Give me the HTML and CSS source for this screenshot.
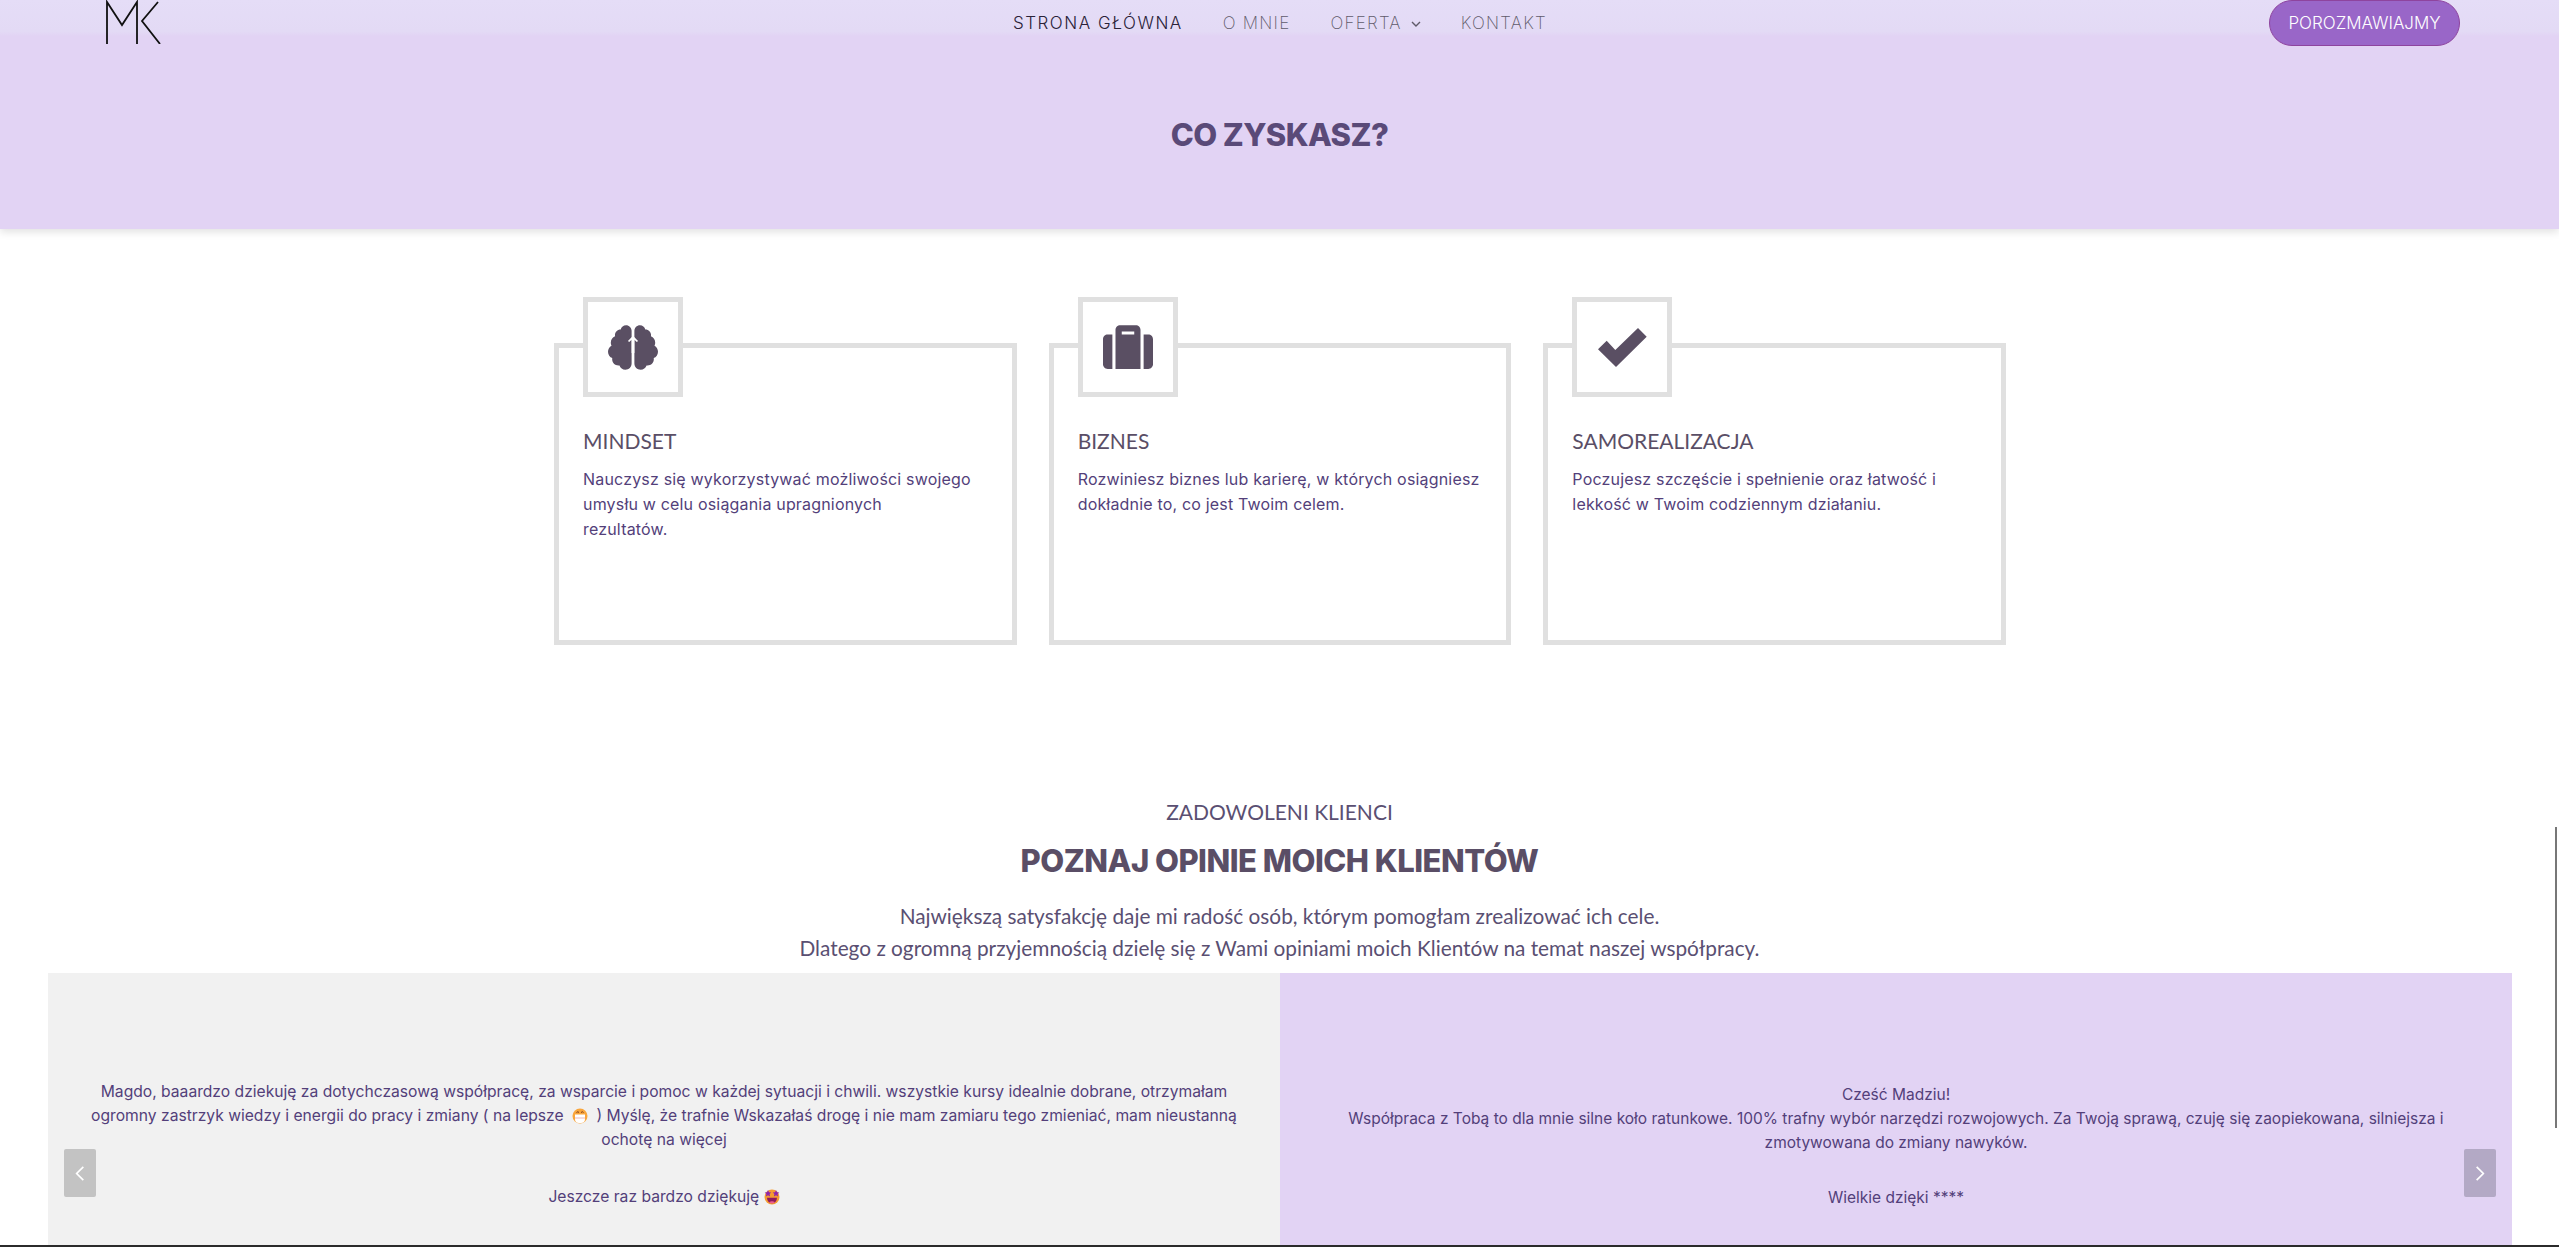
FILE: index.html
```html
<!DOCTYPE html>
<html lang="pl">
<head>
    <meta charset="UTF-8">
    <meta name="viewport" content="width=device-width, initial-scale=1.0">
    <title>Co zyskasz?</title>
    <link rel="stylesheet" href="styles.css">
</head>
<body>
<header class="site-header">
    <a class="logo" href="#">
        <svg viewBox="0 0 56 44" width="56" height="44" fill="none" stroke="#111" stroke-width="1.800">
            <path d="M1 44V2L16 25 31 2V44"/>
            <path d="M52 2 36 21 54 44"/>
        </svg>
    </a>
    <nav class="main-nav">
        <a class="active" href="#">STRONA GŁÓWNA</a>
        <a href="#">O MNIE</a>
        <a href="#">OFERTA
            <svg class="caret" viewBox="0 0 10 6" width="10" height="6" fill="none" stroke="#5f5a68" stroke-width="1.4"><path d="M1 1l4 4 4-4"/></svg>
        </a>
        <a href="#">KONTAKT</a>
    </nav>
    <div class="header-action">
        <a class="talk-btn" href="#">POROZMAWIAJMY</a>
    </div>
</header>

<section class="hero">
    <h1>CO ZYSKASZ?</h1>
</section>

<section class="benefits">
    <div class="benefit-card">
        <div class="icon-box">
            <svg viewBox="0 0 576 512" width="50" height="45" fill="#5a4f63">
                <path d="M208 0c-29.9 0-54.7 20.5-61.8 48.2-.8 0-1.4-.2-2.2-.2-35.3 0-64 28.7-64 64 0 4.8.6 9.5 1.7 14C52.5 138 32 166.6 32 200c0 12.6 3.2 24.3 8.3 34.9C16.3 248.7 0 274.3 0 304c0 33.3 20.4 61.9 49.4 73.9-.9 4.6-1.4 9.3-1.4 14.1 0 39.8 32.2 72 72 72 4.1 0 8.1-.5 12-1.2 9.6 28.5 36.2 49.2 68 49.2 39.8 0 72-32.2 72-72V64c0-35.3-28.7-64-64-64zm368 304c0-29.7-16.3-55.3-40.3-69.1 5.2-10.6 8.3-22.3 8.3-34.9 0-33.4-20.5-62-49.7-74 1-4.5 1.7-9.2 1.7-14 0-35.3-28.7-64-64-64-.8 0-1.5.2-2.2.2C422.7 20.5 397.9 0 368 0c-35.3 0-64 28.6-64 64v376c0 39.8 32.2 72 72 72 31.8 0 58.4-20.7 68-49.2 3.9.7 7.9 1.2 12 1.2 39.8 0 72-32.2 72-72 0-4.8-.5-9.5-1.4-14.1 29-12 49.4-40.6 49.4-73.9z"/>
                <path fill="#fff" d="M288 120l58 62-14 12-28-26v150h-32V168l-28 26-14-12z"/>
            </svg>
        </div>
        <h3>MINDSET</h3>
        <p>Nauczysz się wykorzystywać możliwości swojego<br>umysłu w celu osiągania upragnionych<br>rezultatów.</p>
    </div>
    <div class="benefit-card">
        <div class="icon-box">
            <svg viewBox="0 0 512 448" width="50" height="44" fill="#5a4f63">
                <path d="M128 448h256V48c0-26.5-21.500-48-48-48H176c-26.500 0-48 21.500-48 48v400zm64-384h128v32H192V64zm320 80v256c0 26.500-21.500 48-48 48h-48V96h48c26.500 0 48 21.500 48 48zM96 448H48c-26.500 0-48-21.500-48-48V144c0-26.500 21.500-48 48-48h48v352z"/>
            </svg>
        </div>
        <h3>BIZNES</h3>
        <p>Rozwiniesz biznes lub karierę, w których osiągniesz<br>dokładnie to, co jest Twoim celem.</p>
    </div>
    <div class="benefit-card">
        <div class="icon-box">
            <svg viewBox="0 0 49 39" width="49" height="39" fill="#5a4f63">
                <path d="M48.700 8.700 40 0 17.300 22 8.700 12.700 0 21.300 18 39z"/>
            </svg>
        </div>
        <h3>SAMOREALIZACJA</h3>
        <p>Poczujesz szczęście i spełnienie oraz łatwość i<br>lekkość w Twoim codziennym działaniu.</p>
    </div>
</section>

<section class="opinions">
    <h4>ZADOWOLENI KLIENCI</h4>
    <h2>POZNAJ OPINIE MOICH KLIENTÓW</h2>
    <p class="lead">Największą satysfakcję daje mi radość osób, którym pomogłam zrealizować ich cele.<br>Dlatego z ogromną przyjemnością dzielę się z Wami opiniami moich Klientów na temat naszej współpracy.</p>
</section>

<section class="slider">
    <div class="slide slide-grey">
        <p>Magdo, baaardzo dziekuję za dotychczasową współpracę, za wsparcie i pomoc w każdej sytuacji i chwili. wszystkie kursy idealnie dobrane, otrzymałam<br>ogromny zastrzyk wiedzy i energii do pracy i zmiany ( na lepsze
            <svg class="emoji emoji-wide" viewBox="0 0 16 16" width="16" height="16">
                <circle cx="8" cy="8" r="7.500" fill="#f9a63c"/>
                <path d="M3 6.500h10V11a4 4 0 0 1-4 4H7a4 4 0 0 1-4-4z" fill="#fff"/>
                <path d="M4.500 4.500q1.500-1.500 2.500 0M9 4.500q1.500-1.500 2.500 0" fill="none" stroke="#7a3b1c" stroke-width="1"/>
                <path d="M3 10h10" stroke="#d88" stroke-width=".6"/>
            </svg>
            ) Myślę, że trafnie Wskazałaś drogę i nie mam zamiaru tego zmieniać, mam nieustanną<br>ochotę na więcej</p>
        <p class="sign">Jeszcze raz bardzo dziękuję
            <svg class="emoji" viewBox="0 0 16 16" width="16" height="16">
                <circle cx="8" cy="8" r="7.500" fill="#f59b30"/>
                <path d="M4 1l1 2.200 2.300.3-1.700 1.600.5 2.400L4 6.300 1.900 7.500l.5-2.400L.7 3.500 3 3.200zM12 1l1 2.200 2.300.3-1.700 1.600.5 2.400L12 6.300 9.900 7.500l.5-2.400-1.700-1.600L11 3.200z" fill="#8e24aa"/>
                <path d="M3 8.800h10A5 5.500 0 0 1 3 8.800z" fill="#8e1a5c"/>
                <path d="M5 13.300q3-2 6 0a5 5 0 0 1-6 0z" fill="#f06292"/>
            </svg>
        </p>
    </div>
    <div class="slide slide-lilac">
        <p>Cześć Madziu!<br>Współpraca z Tobą to dla mnie silne koło ratunkowe. 100% trafny wybór narzędzi rozwojowych. Za Twoją sprawą, czuję się zaopiekowana, silniejsza i<br>zmotywowana do zmiany nawyków.</p>
        <p class="sign">Wielkie dzięki ****</p>
    </div>
    <button class="arrow arrow-prev" aria-label="Poprzedni">
        <svg viewBox="0 0 12 20" width="10" height="17" fill="none" stroke="#fff" stroke-width="2"><path d="M10 2 2 10l8 8"/></svg>
    </button>
    <button class="arrow arrow-next" aria-label="Następny">
        <svg viewBox="0 0 12 20" width="10" height="17" fill="none" stroke="#fff" stroke-width="2"><path d="M2 2l8 8-8 8"/></svg>
    </button>
</section>

<div class="scroll-thumb"></div>
<div class="bottom-line"></div>
</body>
</html>
```

FILE: styles.css
```css
html,
body {
    margin: 0;
    padding: 0;
    height: 1247px;
    overflow: hidden;
}

body {
    position: relative;
    font-family: Inter, "Noto Sans", sans-serif;
    background-color: #fff;
    color: #533f7a;
}

h1,
h2,
h3,
h4,
p {
    margin: 0;
    font-weight: normal;
}

a {
    text-decoration: none;
}

/* header lies over the hero */
.site-header {
    position: absolute;
    top: 0;
    left: 0;
    right: 0;
    height: 36px;
    padding: 0 99px 0 106px;
    display: grid;
    grid-template-columns: 1fr auto 1fr;
    background: linear-gradient(#e5ddf7, #e3daf5 88%, #e2d3f4);
    z-index: 2;
}

.logo {
    display: block;
    height: 44px;
}

.main-nav {
    display: flex;
    gap: 40px;
    height: 46px;
    margin-left: -6px;
    align-items: center;
}

.main-nav a {
    color: #5f5a6a;
    font-size: 17px;
    font-weight: 200;
    letter-spacing: 1.25px;
}

.main-nav a.active {
    color: #2a2238;
    font-weight: 300;
    letter-spacing: 1.5px;
}

.caret {
    margin-left: 3px;
    vertical-align: 2px;
}

.header-action {
    display: flex;
    justify-content: flex-end;
}

.talk-btn {
    display: flex;
    align-items: center;
    justify-content: center;
    box-sizing: border-box;
    width: 191px;
    height: 46px;
    background-color: #9966c8;
    border: 1px solid #8e449e;
    border-radius: 23px;
    color: #fff;
    font-size: 17px;
    font-weight: 300;
}

.hero {
    box-sizing: border-box;
    height: 229px;
    padding-top: 40px;
    display: flex;
    align-items: center;
    justify-content: center;
    background-color: #e2d3f4;
    box-shadow: 0 3px 8px rgba(0, 0, 0, 0.12);
}

.hero h1 {
    font-size: 31px;
    font-weight: 800;
    letter-spacing: -0.6px;
    color: #5a4a78;
}

.benefits {
    display: grid;
    grid-template-columns: repeat(3, 1fr);
    gap: 32px;
    width: 1452px;
    margin: 114px 0 0 554px;
}

.benefit-card {
    box-sizing: border-box;
    height: 302px;
    padding: 0 24px;
    border: 5px solid #e0e0e0;
}

.icon-box {
    box-sizing: border-box;
    width: 100px;
    height: 100px;
    margin-top: -51px;
    display: flex;
    align-items: center;
    justify-content: center;
    background-color: #fff;
    border: 5px solid #e0e0e0;
}

.benefit-card h3 {
    margin-top: 31px;
    font-family: Lato, sans-serif;
    font-size: 21px;
    line-height: 26px;
    color: #5a4e66;
}

.benefit-card p {
    margin-top: 13px;
    font-size: 16px;
    line-height: 25px;
    letter-spacing: 0.18px;
}

.opinions {
    margin-top: 154px;
    text-align: center;
    color: #5a4f72;
}

.opinions h4 {
    font-family: Lato, sans-serif;
    font-size: 21px;
    line-height: 26px;
}

.opinions h2 {
    margin-top: 14px;
    font-size: 31px;
    line-height: 44px;
    font-weight: 800;
    letter-spacing: -0.5px;
    color: #5a4e66;
}

.lead {
    margin-top: 17px;
    font-family: Lato, sans-serif;
    font-size: 20.800px;
    line-height: 32px;
}

.slider {
    position: absolute;
    top: 973px;
    left: 48px;
    width: 2464px;
    height: 272px;
    display: grid;
    grid-template-columns: 1fr 1fr;
}

.slide {
    display: flex;
    flex-direction: column;
    justify-content: flex-end;
    text-align: center;
    line-height: 24px;
}

.slide-grey {
    padding-bottom: 36px;
    font-size: 15.650px;
    background-color: #f1f1f1;
}

.slide-grey .sign {
    margin-top: 33px;
}

.slide-lilac {
    padding-bottom: 35px;
    font-size: 15.500px;
    background-color: #e2d3f4;
}

.slide-lilac .sign {
    margin-top: 31px;
}

.emoji {
    vertical-align: -3px;
}

.emoji-wide {
    margin: 0 4px;
}

.arrow {
    position: absolute;
    top: 176px;
    width: 32px;
    height: 48px;
    padding: 0;
    border: none;
    border-radius: 2px;
    display: flex;
    align-items: center;
    justify-content: center;
}

.arrow-prev {
    left: 16px;
    background-color: #c3c3c3;
}

.arrow-next {
    right: 16px;
    background-color: #b3a9c5;
}

.scroll-thumb {
    position: absolute;
    top: 827px;
    right: 2px;
    width: 2px;
    height: 301px;
    background-color: #777;
}

.bottom-line {
    position: absolute;
    left: 0;
    right: 0;
    top: 1245px;
    height: 2px;
    background-color: #2b2b2b;
}
```
